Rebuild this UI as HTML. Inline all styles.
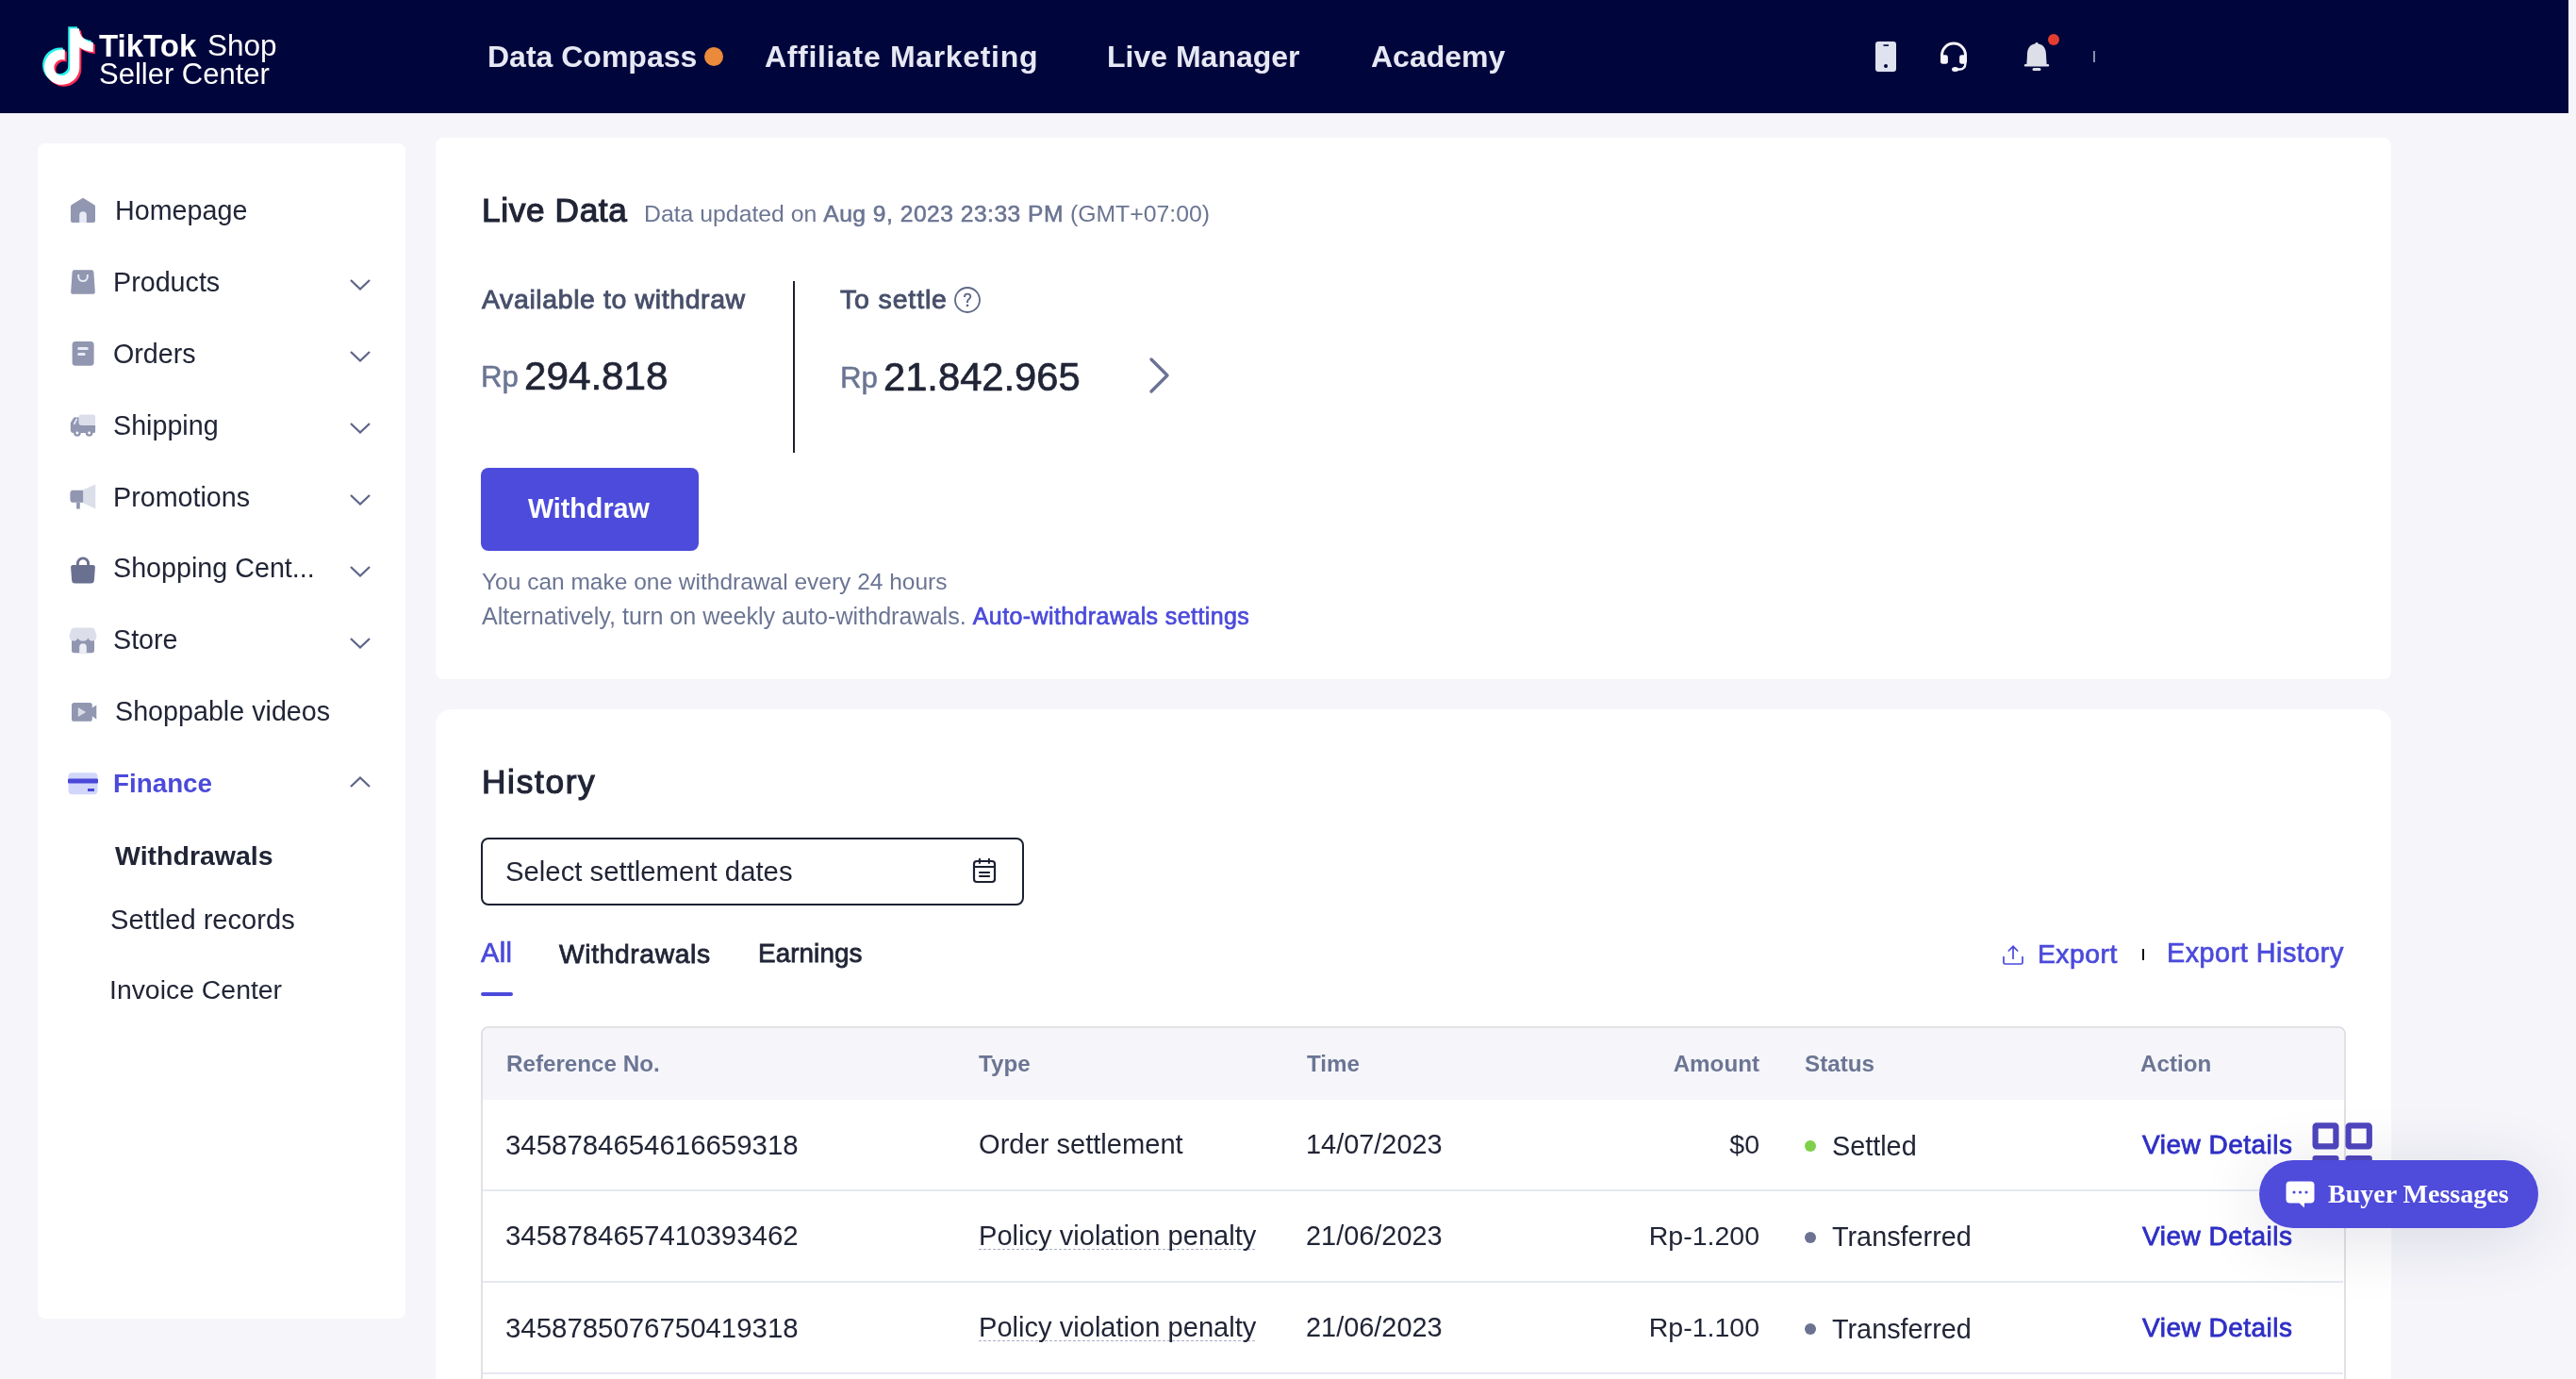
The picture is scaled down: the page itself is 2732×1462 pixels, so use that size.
<!DOCTYPE html>
<html><head><meta charset="utf-8"><title>Withdrawals</title>
<style>
html,body{margin:0;padding:0;}
body{width:2732px;height:1462px;overflow:hidden;position:relative;background:#f5f5fa;font-family:'Liberation Sans',sans-serif;}
#hdr{position:absolute;left:0;top:0;width:2724px;height:120px;background:#00053c;}
.abs{position:absolute;}
.t{position:absolute;white-space:nowrap;will-change:transform;}
.card{position:absolute;background:#ffffff;}
b{font-weight:700;}
@media (max-width:1800px){body{zoom:0.5;}}
</style></head><body>
<div id="hdr"></div><svg class="abs" style="left:0px;top:0px" width="120" height="120" viewBox="0 0 120 120">
<g transform="translate(43.2,30.2) scale(2.48)"><path fill="#25f4ee" transform="translate(-0.8,-0.8)" d="M12.525.02c1.31-.02 2.61-.01 3.91-.02.08 1.53.63 3.09 1.75 4.17 1.12 1.11 2.7 1.62 4.24 1.79v4.03c-1.44-.05-2.89-.35-4.2-.97-.57-.26-1.1-.59-1.62-.93-.01 2.92.01 5.84-.02 8.75-.08 1.4-.54 2.79-1.35 3.94-1.310 1.92-3.58 3.17-5.91 3.21-1.43.08-2.86-.31-4.08-1.030-2.02-1.19-3.44-3.37-3.65-5.71-.02-.5-.03-1-.01-1.49.18-1.9 1.12-3.72 2.58-4.96 1.66-1.44 3.98-2.13 6.15-1.72.02 1.48-.04 2.96-.04 4.44-.99-.32-2.15-.23-3.02.37-.63.41-1.11 1.04-1.36 1.75-.21.51-.15 1.070-.14 1.61.24 1.64 1.82 3.02 3.5 2.87 1.12-.01 2.19-.66 2.77-1.61.19-.33.4-.67.41-1.06.1-1.79.06-3.57.07-5.36.01-4.03-.01-8.05.02-12.07z"/></g>
<g transform="translate(43.2,30.2) scale(2.48)"><path fill="#fe2c55" transform="translate(0.8,0.8)" d="M12.525.02c1.31-.02 2.61-.01 3.91-.02.08 1.53.63 3.09 1.75 4.17 1.12 1.11 2.7 1.62 4.24 1.79v4.03c-1.44-.05-2.89-.35-4.2-.97-.57-.26-1.1-.59-1.62-.93-.01 2.92.01 5.84-.02 8.75-.08 1.4-.54 2.79-1.35 3.94-1.310 1.92-3.58 3.17-5.91 3.21-1.43.08-2.86-.31-4.08-1.030-2.02-1.19-3.44-3.37-3.65-5.71-.02-.5-.03-1-.01-1.49.18-1.9 1.12-3.72 2.58-4.96 1.66-1.44 3.98-2.13 6.15-1.72.02 1.48-.04 2.96-.04 4.44-.99-.32-2.15-.23-3.02.37-.63.41-1.11 1.04-1.36 1.75-.21.51-.15 1.070-.14 1.61.24 1.64 1.82 3.02 3.5 2.87 1.12-.01 2.19-.66 2.77-1.61.19-.33.4-.67.41-1.06.1-1.79.06-3.57.07-5.36.01-4.03-.01-8.05.02-12.07z"/></g>
<g transform="translate(43.2,30.2) scale(2.48)"><path fill="#ffffff" d="M12.525.02c1.31-.02 2.61-.01 3.91-.02.08 1.53.63 3.09 1.75 4.17 1.12 1.11 2.7 1.62 4.24 1.79v4.03c-1.44-.05-2.89-.35-4.2-.97-.57-.26-1.1-.59-1.62-.93-.01 2.92.01 5.84-.02 8.75-.08 1.4-.54 2.79-1.35 3.94-1.310 1.92-3.58 3.17-5.91 3.21-1.43.08-2.86-.31-4.08-1.030-2.02-1.19-3.44-3.37-3.65-5.71-.02-.5-.03-1-.01-1.49.18-1.9 1.12-3.72 2.58-4.96 1.66-1.44 3.98-2.13 6.15-1.72.02 1.48-.04 2.96-.04 4.44-.99-.32-2.15-.23-3.02.37-.63.41-1.11 1.04-1.36 1.75-.21.51-.15 1.070-.14 1.61.24 1.64 1.82 3.02 3.5 2.87 1.12-.01 2.19-.66 2.77-1.61.19-.33.4-.67.41-1.06.1-1.79.06-3.57.07-5.36.01-4.03-.01-8.05.02-12.07z"/></g>
</svg><div class="t" style="left:105px;top:31.66px;font-size:33px;line-height:33px;color:#ffffff;font-weight:700;font-family:'Liberation Sans',sans-serif;">TikTok</div>
<div class="t" style="left:220px;top:32.93px;font-size:31.5px;line-height:31.5px;color:#ffffff;font-weight:400;font-family:'Liberation Sans',sans-serif;">Shop</div>
<div class="t" style="left:105px;top:63.05px;font-size:31px;line-height:31px;color:#ffffff;font-weight:400;font-family:'Liberation Sans',sans-serif;">Seller Center</div>
<div class="t" style="left:517px;top:43.71px;font-size:32px;line-height:32px;color:#e6e8f4;font-weight:700;font-family:'Liberation Sans',sans-serif;">Data Compass</div>
<div class="abs" style="left:747px;top:50px;width:20px;height:20px;border-radius:50%;background:#ea8a3a"></div><div class="t" style="left:811px;top:43.71px;font-size:32px;line-height:32px;color:#e6e8f4;font-weight:700;font-family:'Liberation Sans',sans-serif;letter-spacing:0.67px;">Affiliate Marketing</div>
<div class="t" style="left:1174px;top:43.71px;font-size:32px;line-height:32px;color:#e6e8f4;font-weight:700;font-family:'Liberation Sans',sans-serif;">Live Manager</div>
<div class="t" style="left:1454px;top:43.71px;font-size:32px;line-height:32px;color:#e6e8f4;font-weight:700;font-family:'Liberation Sans',sans-serif;">Academy</div>
<svg class="abs" style="left:1989px;top:44px" width="22" height="32" viewBox="0 0 22 32">
<rect x="0" y="0" width="22" height="32" rx="3" fill="#dfe2ef"/>
<rect x="8.5" y="3.3" width="5.5" height="1.6" fill="#00053c"/>
<circle cx="11" cy="26" r="2" fill="#00053c"/></svg><svg class="abs" style="left:2056px;top:43px" width="32" height="34" viewBox="0 0 32 34">
<path d="M3.5 17.5 V15.6 A12.5 12.5 0 0 1 28.5 15.6 V17.5" fill="none" stroke="#f4f4fa" stroke-width="3"/>
<rect x="2" y="15.3" width="7.9" height="9.5" rx="2.4" fill="#f4f4fa"/>
<rect x="22.1" y="15.3" width="7.9" height="9.5" rx="2.4" fill="#f4f4fa"/>
<path d="M28.3 23.5 V25 A5.5 5.5 0 0 1 22.8 30.5 H19" fill="none" stroke="#f4f4fa" stroke-width="2.4"/>
<ellipse cx="17.6" cy="30.4" rx="3.6" ry="2.5" fill="#f4f4fa"/></svg><svg class="abs" style="left:2146px;top:44px" width="28" height="32" viewBox="0 0 28 32">
<path d="M14 1 C15 1 15.5 1.6 15.5 2.3 C22 3.6 24 8.5 24 14 L24.6 24 H25.8 C26.7 24 27.2 24.6 27.2 25.3 C27.2 26 26.7 26.6 25.8 26.6 H2.2 C1.3 26.6 0.8 26 0.8 25.3 C0.8 24.6 1.3 24 2.2 24 H3.4 L4 14 C4 8.5 6 3.6 12.5 2.3 C12.5 1.6 13 1 14 1 Z" fill="#dcdfe8"/>
<rect x="9.5" y="28" width="9" height="3" rx="1.5" fill="#dcdfe8"/></svg><div class="abs" style="left:2172px;top:36px;width:12px;height:12px;border-radius:50%;background:#e43d30"></div><div class="abs" style="left:2220px;top:54px;width:2px;height:12px;background:#8a8fb0"></div><div class="card" style="left:40px;top:152px;width:390px;height:1246px;border-radius:8px"></div><div class="t" style="left:122px;top:208.90px;font-size:28.7px;line-height:28.7px;color:#212536;font-weight:400;font-family:'Liberation Sans',sans-serif;">Homepage</div>
<div class="t" style="left:120px;top:284.70px;font-size:28.7px;line-height:28.7px;color:#212536;font-weight:400;font-family:'Liberation Sans',sans-serif;">Products</div>
<div class="t" style="left:120px;top:360.70px;font-size:28.7px;line-height:28.7px;color:#212536;font-weight:400;font-family:'Liberation Sans',sans-serif;">Orders</div>
<div class="t" style="left:120px;top:436.70px;font-size:28.7px;line-height:28.7px;color:#212536;font-weight:400;font-family:'Liberation Sans',sans-serif;">Shipping</div>
<div class="t" style="left:120px;top:512.70px;font-size:28.7px;line-height:28.7px;color:#212536;font-weight:400;font-family:'Liberation Sans',sans-serif;">Promotions</div>
<div class="t" style="left:120px;top:588.20px;font-size:28.7px;line-height:28.7px;color:#212536;font-weight:400;font-family:'Liberation Sans',sans-serif;">Shopping Cent...</div>
<div class="t" style="left:120px;top:664.30px;font-size:28.7px;line-height:28.7px;color:#212536;font-weight:400;font-family:'Liberation Sans',sans-serif;">Store</div>
<div class="t" style="left:122px;top:740.40px;font-size:28.7px;line-height:28.7px;color:#212536;font-weight:400;font-family:'Liberation Sans',sans-serif;">Shoppable videos</div>
<div class="t" style="left:120px;top:817.36px;font-size:27.8px;line-height:27.8px;color:#4b4adb;font-weight:700;font-family:'Liberation Sans',sans-serif;">Finance</div>
<div class="t" style="left:122px;top:892.77px;font-size:28.5px;line-height:28.5px;color:#212536;font-weight:700;font-family:'Liberation Sans',sans-serif;">Withdrawals</div>
<div class="t" style="left:116.5px;top:961.46px;font-size:29.1px;line-height:29.1px;color:#212536;font-weight:400;font-family:'Liberation Sans',sans-serif;">Settled records</div>
<div class="t" style="left:116px;top:1035.15px;font-size:28.4px;line-height:28.4px;color:#212536;font-weight:400;font-family:'Liberation Sans',sans-serif;">Invoice Center</div>
<svg class="abs" style="left:370px;top:294.0px" width="24" height="16" viewBox="0 0 24 16"><path d="M2 3 L12 12.5 L22 3" fill="none" stroke="#5e6687" stroke-width="2.3"/></svg><svg class="abs" style="left:370px;top:370.0px" width="24" height="16" viewBox="0 0 24 16"><path d="M2 3 L12 12.5 L22 3" fill="none" stroke="#5e6687" stroke-width="2.3"/></svg><svg class="abs" style="left:370px;top:446.0px" width="24" height="16" viewBox="0 0 24 16"><path d="M2 3 L12 12.5 L22 3" fill="none" stroke="#5e6687" stroke-width="2.3"/></svg><svg class="abs" style="left:370px;top:522.0px" width="24" height="16" viewBox="0 0 24 16"><path d="M2 3 L12 12.5 L22 3" fill="none" stroke="#5e6687" stroke-width="2.3"/></svg><svg class="abs" style="left:370px;top:597.5px" width="24" height="16" viewBox="0 0 24 16"><path d="M2 3 L12 12.5 L22 3" fill="none" stroke="#5e6687" stroke-width="2.3"/></svg><svg class="abs" style="left:370px;top:673.6px" width="24" height="16" viewBox="0 0 24 16"><path d="M2 3 L12 12.5 L22 3" fill="none" stroke="#5e6687" stroke-width="2.3"/></svg><svg class="abs" style="left:370px;top:821px" width="24" height="16" viewBox="0 0 24 16"><path d="M2 13 L12 3.5 L22 13" fill="none" stroke="#5e6687" stroke-width="2.3"/></svg><svg class="abs" style="left:74px;top:209px" width="28" height="28" viewBox="0 0 28 28">
<path d="M14 0.8 L26.2 8.3 Q27 8.8 27 9.8 V25 Q27 27 25 27 H3 Q1 27 1 25 V9.8 Q1 8.8 1.8 8.3 Z" fill="#9196b1"/>
<path d="M10.2 27 V19 A3.8 3.8 0 0 1 17.8 19 V27 Z" fill="#e8eaf5"/></svg><svg class="abs" style="left:74px;top:285px" width="28" height="28" viewBox="0 0 28 28">
<path d="M5 1.2 H23 Q25.2 1.2 25.4 3.4 L26.8 24.5 Q27 26.8 24.6 26.8 H3.4 Q1 26.8 1.2 24.5 L2.6 3.4 Q2.8 1.2 5 1.2 Z" fill="#9196b1"/>
<path d="M9.2 6 V8.3 A4.8 4.8 0 0 0 18.8 8.3 V6" fill="none" stroke="#e8eaf5" stroke-width="2"/></svg><svg class="abs" style="left:76px;top:361px" width="24" height="28" viewBox="0 0 24 28">
<rect x="0.6" y="1" width="23" height="25.8" rx="3.5" fill="#9196b1"/>
<rect x="6.2" y="7" width="11.5" height="3" rx="1.5" fill="#e8eaf5"/>
<rect x="6.2" y="13" width="8.5" height="3" rx="1.5" fill="#e8eaf5"/></svg><svg class="abs" style="left:74px;top:438px" width="28" height="26" viewBox="0 0 28 26">
<rect x="9.5" y="1.5" width="17.6" height="12" rx="2.5" fill="#dcdfea"/>
<path d="M4.5 4.4 H9.5 V10 Q9.5 13 12.5 13 H27.1 V19.5 Q27.1 21 25.6 21 H4 Q0.8 21 0.8 17.5 V11.5 Q0.8 10 1.5 9 Z" fill="#9196b1"/>
<path d="M4.8 11.3 L7.2 6.6" stroke="#e8eaf5" stroke-width="1.8" stroke-linecap="round"/>
<circle cx="7.9" cy="21" r="3.8" fill="#9196b1"/><circle cx="7.9" cy="21" r="1.4" fill="#ffffff"/>
<circle cx="20.6" cy="21" r="3.8" fill="#9196b1"/><circle cx="20.6" cy="21" r="1.4" fill="#ffffff"/></svg><svg class="abs" style="left:74px;top:512px" width="28" height="28" viewBox="0 0 28 28">
<path d="M14.2 7.2 L27.3 1.4 V27.5 L14.2 21.2 Z" fill="#dcdfea"/>
<path d="M3.8 7.8 H14.2 V20.8 H3.8 Q0.4 20.8 0.4 17.4 V11.2 Q0.4 7.8 3.8 7.8 Z" fill="#9196b1"/>
<rect x="7.1" y="20.8" width="3.7" height="6.7" fill="#9196b1"/></svg><svg class="abs" style="left:74px;top:589px" width="28" height="30" viewBox="0 0 28 30">
<path d="M8.4 10.5 V8.5 A5.6 5.6 0 0 1 19.6 8.5 V10.5" fill="none" stroke="#6a7190" stroke-width="2.9"/>
<path d="M3.5 10 H24.5 Q27 10 26.9 12.5 L25.9 26 Q25.7 29.6 22.2 29.6 H5.8 Q2.3 29.6 2.1 26 L1.1 12.5 Q1 10 3.5 10 Z" fill="#6a7190"/></svg><svg class="abs" style="left:73px;top:665px" width="30" height="28" viewBox="0 0 30 28">
<path d="M3 5.5 H27 V17.8 H3 Z" fill="#9196b1" />
<rect x="3" y="13" width="24" height="14.3" rx="2.8" fill="#9196b1"/>
<path d="M5.5 0.5 H24.5 Q27 0.5 27.7 3 L29.4 9 Q30 14 25 14.6 Q21.5 14.6 20.5 11.5 Q19.2 14.6 15 14.6 Q10.8 14.6 9.5 11.5 Q8.5 14.6 5 14.6 Q0 14 0.6 9 L2.3 3 Q3 0.5 5.5 0.5 Z" fill="#dcdfea"/>
<path d="M11.2 27.3 V21 A3.8 3.8 0 0 1 18.8 21 V27.3 Z" fill="#eceef5"/></svg><svg class="abs" style="left:75px;top:744px" width="29" height="22" viewBox="0 0 29 22">
<rect x="1" y="1" width="21.8" height="19.8" rx="2.6" fill="#9196b1"/>
<path d="M22 7 L27.3 3.4 V18.5 L22 14.8 Z" fill="#9196b1"/>
<path d="M7.8 6 L16.2 11 L7.8 16 Z" fill="#dadde8"/></svg><svg class="abs" style="left:72px;top:818px" width="32" height="26" viewBox="0 0 32 26">
<rect x="0.5" y="1.3" width="31" height="23" rx="4" fill="#d1d6fa"/>
<rect x="0" y="7.4" width="32" height="5.2" rx="1" fill="#4a48d8"/>
<rect x="21" y="18" width="7" height="3" fill="#4a48d8"/></svg><div class="card" style="left:462px;top:146px;width:2074px;height:574px;border-radius:8px"></div><div class="t" style="left:511px;top:205.00px;font-size:35.2px;line-height:35.2px;color:#212536;font-weight:400;font-family:'Liberation Sans',sans-serif;-webkit-text-stroke:1.2px #212536;letter-spacing:0.65px;">Live Data</div>
<div class="t" style="left:682.5px;top:215.20px;font-size:24.8px;line-height:24.8px;color:#6b7593;font-weight:400;font-family:'Liberation Sans',sans-serif;">Data updated on <span style="font-size:24.6px;-webkit-text-stroke:0.6px #6b7593;letter-spacing:0.5px">Aug 9, 2023 23:33 PM</span> (GMT+07:00)</div>
<div class="t" style="left:511px;top:302.87px;font-size:28.5px;line-height:28.5px;color:#474f6a;font-weight:400;font-family:'Liberation Sans',sans-serif;-webkit-text-stroke:0.9px #474f6a;letter-spacing:0.6px;">Available to withdraw</div>
<div class="t" style="left:510px;top:384.48px;font-size:31.2px;line-height:31.2px;color:#6b7593;font-weight:400;font-family:'Liberation Sans',sans-serif;-webkit-text-stroke:0.5px #6b7593;">Rp</div>
<div class="t" style="left:556px;top:377.97px;font-size:42.2px;line-height:42.2px;color:#212536;font-weight:400;font-family:'Liberation Sans',sans-serif;-webkit-text-stroke:0.7px #212536;">294.818</div>
<div class="abs" style="left:841px;top:298px;width:2.4px;height:182px;background:#1c2131"></div><div class="t" style="left:891px;top:302.77px;font-size:28.5px;line-height:28.5px;color:#474f6a;font-weight:400;font-family:'Liberation Sans',sans-serif;-webkit-text-stroke:0.9px #474f6a;letter-spacing:0.85px;">To settle</div>
<svg class="abs" style="left:1011px;top:303px" width="30" height="30" viewBox="0 0 30 30"><circle cx="15" cy="15" r="13" fill="none" stroke="#5f6888" stroke-width="1.8"/><path d="M11.9 12 C11.9 9.8 13.3 8.6 15 8.6 C16.9 8.6 18.3 9.8 18.3 11.5 C18.3 13.8 15 14.3 15 16.6 V17.9" fill="none" stroke="#5f6888" stroke-width="1.9"/><circle cx="15" cy="20.9" r="1.3" fill="#5f6888"/></svg><div class="t" style="left:891px;top:384.58px;font-size:31.2px;line-height:31.2px;color:#6b7593;font-weight:400;font-family:'Liberation Sans',sans-serif;-webkit-text-stroke:0.5px #6b7593;">Rp</div>
<div class="t" style="left:937px;top:379.29px;font-size:41.7px;line-height:41.7px;color:#212536;font-weight:400;font-family:'Liberation Sans',sans-serif;-webkit-text-stroke:0.7px #212536;">21.842.965</div>
<svg class="abs" style="left:1216px;top:377px" width="28" height="42" viewBox="0 0 28 42"><path d="M5 4 L22 21 L5 38" fill="none" stroke="#6b7394" stroke-width="3.4" stroke-linecap="round" stroke-linejoin="round"/></svg><div class="abs" style="left:510px;top:496px;width:231px;height:88px;border-radius:8px;background:#4c4bdb"></div><div class="t" style="left:560px;top:524.80px;font-size:28.7px;line-height:28.7px;color:#ffffff;font-weight:700;font-family:'Liberation Sans',sans-serif;">Withdraw</div>
<div class="t" style="left:511px;top:605.26px;font-size:24.5px;line-height:24.5px;color:#6b7593;font-weight:400;font-family:'Liberation Sans',sans-serif;">You can make one withdrawal every 24 hours</div>
<div class="t" style="left:511px;top:640.51px;font-size:25.15px;line-height:25.15px;color:#6b7593;font-weight:400;font-family:'Liberation Sans',sans-serif;">Alternatively, turn on weekly auto-withdrawals. <span style="color:#4b4adb;font-size:25px;letter-spacing:0.4px;-webkit-text-stroke:0.7px #4b4adb">Auto-withdrawals settings</span></div>
<div class="card" style="left:462px;top:752px;width:2074px;height:760px;border-radius:16px"></div><div class="t" style="left:511px;top:810.70px;font-size:35.2px;line-height:35.2px;color:#212536;font-weight:400;font-family:'Liberation Sans',sans-serif;-webkit-text-stroke:1.2px #212536;letter-spacing:1.7px;">History</div>
<div class="abs" style="left:510px;top:888px;width:576px;height:72px;box-sizing:border-box;border:2.2px solid #1c2131;border-radius:8px"></div><div class="t" style="left:536px;top:908.79px;font-size:29.3px;line-height:29.3px;color:#212536;font-weight:400;font-family:'Liberation Sans',sans-serif;">Select settlement dates</div>
<svg class="abs" style="left:1031px;top:909px" width="26" height="28" viewBox="0 0 26 28">
<rect x="2" y="4" width="22" height="22" rx="3" fill="none" stroke="#1c2131" stroke-width="2.2"/>
<path d="M7.9 1 V6.8 M17.9 1 V6.8 M2 10 H24 M7.2 16 H18.9 M7.2 20 H18.9" stroke="#1c2131" stroke-width="2"/></svg><div class="t" style="left:510px;top:996.45px;font-size:29px;line-height:29px;color:#4b4adb;font-weight:400;font-family:'Liberation Sans',sans-serif;-webkit-text-stroke:0.7px #4b4adb;letter-spacing:0.3px;">All</div>
<div class="t" style="left:593px;top:997.04px;font-size:28.3px;line-height:28.3px;color:#212536;font-weight:400;font-family:'Liberation Sans',sans-serif;-webkit-text-stroke:0.8px #212536;letter-spacing:0.6px;">Withdrawals</div>
<div class="t" style="left:804px;top:997.46px;font-size:27.8px;line-height:27.8px;color:#212536;font-weight:400;font-family:'Liberation Sans',sans-serif;-webkit-text-stroke:0.8px #212536;letter-spacing:0.1px;">Earnings</div>
<div class="abs" style="left:510px;top:1052px;width:34px;height:4px;border-radius:2px;background:#4b4adb"></div><svg class="abs" style="left:2123px;top:1001px" width="24" height="22" viewBox="0 0 24 22">
<path d="M2 13 V19.5 Q2 21 3.5 21 H20.5 Q22 21 22 19.5 V13" fill="none" stroke="#4b4adb" stroke-width="1.7"/>
<path d="M12 16 V2.5 M6.8 7.5 L12 2.3 L17.2 7.5" fill="none" stroke="#4b4adb" stroke-width="1.7"/></svg><div class="t" style="left:2161px;top:996.84px;font-size:28.3px;line-height:28.3px;color:#4b4adb;font-weight:400;font-family:'Liberation Sans',sans-serif;-webkit-text-stroke:0.7px #4b4adb;letter-spacing:0.5px;">Export</div>
<div class="abs" style="left:2271.5px;top:1006px;width:2.6px;height:12px;background:#111"></div><div class="t" style="left:2298px;top:996.42px;font-size:28.8px;line-height:28.8px;color:#4b4adb;font-weight:400;font-family:'Liberation Sans',sans-serif;-webkit-text-stroke:0.7px #4b4adb;letter-spacing:0.5px;">Export History</div>
<div class="abs" style="left:510px;top:1088px;width:1978px;height:500px;box-sizing:border-box;border:2px solid #e1e1e4;border-radius:8px;overflow:hidden"><div style="height:76px;background:#f5f5fa"></div></div><div class="t" style="left:537px;top:1116.41px;font-size:24.2px;line-height:24.2px;color:#6b7593;font-weight:700;font-family:'Liberation Sans',sans-serif;">Reference No.</div>
<div class="t" style="left:1038px;top:1116.41px;font-size:24.2px;line-height:24.2px;color:#6b7593;font-weight:700;font-family:'Liberation Sans',sans-serif;">Type</div>
<div class="t" style="left:1386px;top:1116.41px;font-size:24.2px;line-height:24.2px;color:#6b7593;font-weight:700;font-family:'Liberation Sans',sans-serif;">Time</div>
<div class="t" style="left:1700px;width:166px;text-align:right;top:1116.41px;font-size:24.2px;line-height:24.2px;color:#6b7593;font-weight:700">Amount</div><div class="t" style="left:1914px;top:1116.41px;font-size:24.2px;line-height:24.2px;color:#6b7593;font-weight:700;font-family:'Liberation Sans',sans-serif;">Status</div>
<div class="t" style="left:2270px;top:1116.41px;font-size:24.2px;line-height:24.2px;color:#6b7593;font-weight:700;font-family:'Liberation Sans',sans-serif;">Action</div>
<div class="abs" style="left:512px;top:1261px;width:1973px;height:2px;background:#e6e8f1"></div><div class="abs" style="left:512px;top:1358px;width:1973px;height:2px;background:#e6e8f1"></div><div class="abs" style="left:512px;top:1455px;width:1973px;height:2px;background:#e6e8f1"></div><div class="t" style="left:536px;top:1198.51px;font-size:29.4px;line-height:29.4px;color:#212536;font-weight:400;font-family:'Liberation Sans',sans-serif;">3458784654616659318</div>
<div class="t" style="left:1038px;top:1198.76px;font-size:29.1px;line-height:29.1px;color:#212536;font-weight:400;font-family:'Liberation Sans',sans-serif;">Order settlement</div>
<div class="t" style="left:1385px;top:1198.93px;font-size:28.9px;line-height:28.9px;color:#212536;font-weight:400;font-family:'Liberation Sans',sans-serif;">14/07/2023</div>
<div class="t" style="left:1600px;width:266px;text-align:right;top:1199.27px;font-size:28.5px;line-height:28.5px;color:#212536">$0</div><div class="abs" style="left:1914px;top:1208.9px;width:12.4px;height:12.4px;border-radius:50%;background:#7ed04b"></div><div class="t" style="left:1942.5px;top:1200.52px;font-size:28.8px;line-height:28.8px;color:#212536;font-weight:400;font-family:'Liberation Sans',sans-serif;">Settled</div>
<div class="t" style="left:2272px;top:1199.69px;font-size:28px;line-height:28px;color:#2f2fc6;font-weight:400;font-family:'Liberation Sans',sans-serif;-webkit-text-stroke:0.8px #2f2fc6;letter-spacing:0.5px;">View Details</div>
<div class="t" style="left:536px;top:1295.41px;font-size:29.4px;line-height:29.4px;color:#212536;font-weight:400;font-family:'Liberation Sans',sans-serif;">3458784657410393462</div>
<div class="abs" style="left:1038px;top:1324px;width:295px;height:1px;background:repeating-linear-gradient(90deg,#a9aec6 0 3px,transparent 3px 5px)"></div><div class="t" style="left:1038px;top:1295.66px;font-size:29.1px;line-height:29.1px;color:#212536;font-weight:400;font-family:'Liberation Sans',sans-serif;">Policy violation penalty</div>
<div class="t" style="left:1385px;top:1295.83px;font-size:28.9px;line-height:28.9px;color:#212536;font-weight:400;font-family:'Liberation Sans',sans-serif;">21/06/2023</div>
<div class="t" style="left:1600px;width:266px;text-align:right;top:1296.17px;font-size:28.5px;line-height:28.5px;color:#212536">Rp-1.200</div><div class="abs" style="left:1914px;top:1305.8px;width:12.4px;height:12.4px;border-radius:50%;background:#6b7390"></div><div class="t" style="left:1942.5px;top:1297.42px;font-size:28.8px;line-height:28.8px;color:#212536;font-weight:400;font-family:'Liberation Sans',sans-serif;">Transferred</div>
<div class="t" style="left:2272px;top:1296.59px;font-size:28px;line-height:28px;color:#2f2fc6;font-weight:400;font-family:'Liberation Sans',sans-serif;-webkit-text-stroke:0.8px #2f2fc6;letter-spacing:0.5px;">View Details</div>
<div class="t" style="left:536px;top:1392.51px;font-size:29.4px;line-height:29.4px;color:#212536;font-weight:400;font-family:'Liberation Sans',sans-serif;">3458785076750419318</div>
<div class="abs" style="left:1038px;top:1421px;width:295px;height:1px;background:repeating-linear-gradient(90deg,#a9aec6 0 3px,transparent 3px 5px)"></div><div class="t" style="left:1038px;top:1392.76px;font-size:29.1px;line-height:29.1px;color:#212536;font-weight:400;font-family:'Liberation Sans',sans-serif;">Policy violation penalty</div>
<div class="t" style="left:1385px;top:1392.93px;font-size:28.9px;line-height:28.9px;color:#212536;font-weight:400;font-family:'Liberation Sans',sans-serif;">21/06/2023</div>
<div class="t" style="left:1600px;width:266px;text-align:right;top:1393.27px;font-size:28.5px;line-height:28.5px;color:#212536">Rp-1.100</div><div class="abs" style="left:1914px;top:1402.9px;width:12.4px;height:12.4px;border-radius:50%;background:#6b7390"></div><div class="t" style="left:1942.5px;top:1394.52px;font-size:28.8px;line-height:28.8px;color:#212536;font-weight:400;font-family:'Liberation Sans',sans-serif;">Transferred</div>
<div class="t" style="left:2272px;top:1393.69px;font-size:28px;line-height:28px;color:#2f2fc6;font-weight:400;font-family:'Liberation Sans',sans-serif;-webkit-text-stroke:0.8px #2f2fc6;letter-spacing:0.5px;">View Details</div>
<svg class="abs" style="left:2450px;top:1188px" width="70" height="50" viewBox="0 0 70 50">
<rect x="5.6" y="5.3" width="21.8" height="22" rx="1.2" fill="none" stroke="#4f45bd" stroke-width="6.2"/>
<rect x="40.6" y="5.3" width="22.2" height="22" rx="1.2" fill="none" stroke="#4f45bd" stroke-width="6.2"/>
<rect x="2.5" y="37.1" width="28" height="20" rx="3" fill="#4f45bd"/>
<rect x="37.5" y="37.1" width="28.3" height="20" rx="3" fill="#4f45bd"/></svg><div class="abs" style="left:2396px;top:1230px;width:296px;height:72px;border-radius:36px;background:#4f4bdb;box-shadow:0 10px 70px rgba(40,40,90,0.14)"></div><svg class="abs" style="left:2424px;top:1252px" width="32" height="30" viewBox="0 0 32 30">
<path d="M4.5 0.5 H26.5 Q30.5 0.5 30.5 4.5 V19.5 Q30.5 23.5 26.5 23.5 H20 L19.8 28.5 L14.5 23.5 H4.5 Q0.5 23.5 0.5 19.5 V4.5 Q0.5 0.5 4.5 0.5 Z" fill="#ffffff"/>
<circle cx="9" cy="12" r="1.6" fill="#4f4bdb"/><circle cx="15.5" cy="12" r="1.6" fill="#4f4bdb"/><circle cx="22" cy="12" r="1.6" fill="#4f4bdb"/></svg><div class="t" style="left:2468.5px;top:1251.65px;font-size:28px;line-height:28px;color:#ffffff;font-weight:700;font-family:'Liberation Serif',sans-serif;">Buyer Messages</div>

</body></html>
